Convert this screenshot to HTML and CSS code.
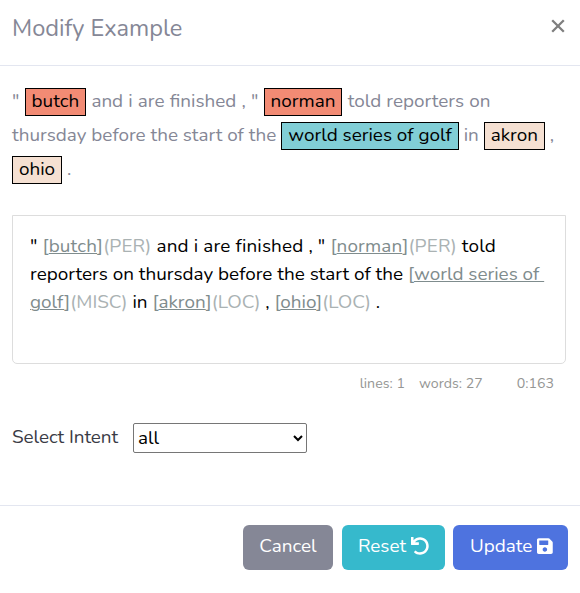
FILE: index.html
```html
<!DOCTYPE html>
<html lang="en">
<head>
  <meta charset="UTF-8" />
  <meta name="viewport" content="width=device-width, initial-scale=1" />
  <title>Modify Example</title>
  <link rel="stylesheet" href="styles.css">
</head>
<body>
  <div class="modal-content">
    <header class="modal-header">
      <h5 class="modal-title">Modify Example</h5>
      <button class="close" type="button" aria-label="Close">
        <svg viewBox="0 0 14 14"><path d="M1.2 1.2 12.8 12.8M12.8 1.2 1.2 12.8" /></svg>
      </button>
    </header>

    <div class="modal-body">
      <div class="preview">
        <div class="line line-1">" <span class="entity per">butch</span> and i are finished , " <span class="entity per">norman</span> told reporters on</div>
        <div class="line line-2">thursday before the start of the <span class="entity misc">world series of golf</span> in <span class="entity loc">akron</span> ,</div>
        <div class="line line-3"><span class="entity loc">ohio</span> .</div>
      </div>

      <div class="editor" contenteditable="true" spellcheck="false">
        <div class="row row-1">" <span class="link">[<u>butch</u>]</span><span class="url">(PER)</span> and i are finished , " <span class="link">[<u>norman</u>]</span><span class="url">(PER)</span> told</div>
        <div class="row row-2">reporters on thursday before the start of the <span class="link">[<u>world series of </u></span></div>
        <div class="row row-3"><span class="link"><u>golf</u>]</span><span class="url">(MISC)</span> in <span class="link">[<u>akron</u>]</span><span class="url">(LOC)</span> , <span class="link">[<u>ohio</u>]</span><span class="url">(LOC)</span> .</div>
      </div>
      <div class="editor-statusbar">
        <span class="lines">lines: 1</span>
        <span class="words">words: 27</span>
        <span class="cursor">0:163</span>
      </div>

      <div class="intent">
        <label for="intent">Select Intent</label>
        <select id="intent">
          <option>all</option>
        </select>
      </div>
    </div>

    <footer class="modal-footer">
      <button class="btn btn-secondary" type="button">Cancel</button>
      <button class="btn btn-info" type="button">Reset
        <svg class="icon-undo" viewBox="0 0 512 512"><path d="M212.333 224.333H12c-6.627 0-12-5.373-12-12V12C0 5.373 5.373 0 12 0h48c6.627 0 12 5.373 12 12v78.112C117.773 39.279 184.26 7.47 258.175 8.007c136.906.994 246.448 111.623 246.157 248.532C504.041 393.258 393.12 504 256.333 504c-64.089 0-122.496-24.313-166.51-64.215-5.099-4.622-5.334-12.554-.467-17.42l33.967-33.967c4.474-4.474 11.662-4.717 16.401-.525C170.76 415.336 211.58 432 256.333 432c97.268 0 176-78.716 176-176 0-97.267-78.716-176-176-176-58.496 0-110.28 28.476-142.274 72.333h98.274c6.627 0 12 5.373 12 12v48c0 6.627-5.373 12-12 12z" /></svg>
      </button>
      <button class="btn btn-primary" type="button">Update
        <svg class="icon-save" viewBox="0 0 448 512"><path d="M433.941 129.941l-83.882-83.882A48 48 0 0 0 316.118 32H48C21.49 32 0 53.49 0 80v352c0 26.51 21.49 48 48 48h352c26.51 0 48-21.49 48-48V163.882a48 48 0 0 0-14.059-33.941zM224 416c-35.346 0-64-28.654-64-64 0-35.346 28.654-64 64-64s64 28.654 64 64c0 35.346-28.654 64-64 64zm96-304.52V212c0 6.627-5.373 12-12 12H76c-6.627 0-12-5.373-12-12V108c0-6.627 5.373-12 12-12h228.52c3.183 0 6.235 1.264 8.485 3.515l3.48 3.48A11.996 11.996 0 0 1 320 111.48z" /></svg>
      </button>
    </footer>
  </div>
</body>
</html>
```
FILE: styles.css
```css
* {
  box-sizing: border-box;
}

body {
  margin: 0;
  background: #fff;
  color: #858796;
  font-family: Nunito, Lato, sans-serif;
  font-size: 18.9px;
  font-weight: 370;
  line-height: 28px;
}

button,
select {
  font-family: inherit;
  font-size: inherit;
  font-weight: inherit;
}

.modal-content {
  height: 593px;
  overflow: hidden;
}

.modal-header {
  display: flex;
  justify-content: space-between;
  height: 66px;
  padding: 12px 15px 0 12px;
  border-bottom: 1px solid #e3e6f0;
}

.modal-title {
  margin: 0;
  font-size: 23.6px;
  font-weight: inherit;
  line-height: 32px;
}

.close {
  height: 14px;
  margin-top: 7px;
  padding: 0;
  border: 0;
  background: none;
}

.close svg {
  display: block;
  width: 14px;
  height: 14px;
  fill: none;
  stroke: #7f7f7f;
  stroke-width: 2.3;
}

.modal-body {
  height: 439px;
  padding: 18px 14px 0 12px;
}

.preview {
  height: 131px;
  white-space: nowrap;
}

.line {
  height: 34px;
  line-height: 34px;
}

.line-1 {
  word-spacing: 0.3px;
}

.entity {
  display: inline-block;
  height: 28px;
  padding: 0 6px;
  border: 1px solid #000;
  color: #000;
  line-height: 24px;
}

.per {
  background: #f28b74;
}

.misc {
  background: #81ced6;
}

.loc {
  background: #f5e0d2;
}

.editor {
  height: 149px;
  padding: 16px 17px;
  border: 1px solid #ddd;
  border-radius: 0 0 5px 5px;
  color: #000;
  font-variant-ligatures: none;
}

.row {
  height: 28px;
  white-space: pre;
}

.row-1 {
  letter-spacing: 0.15px;
}

.link {
  color: #7f8c8d;
}

.link u {
  text-underline-offset: 1px;
  text-decoration-thickness: 1px;
}

.url {
  color: #aab2b3;
}

.editor-statusbar {
  display: flex;
  justify-content: flex-end;
  height: 39px;
  padding: 6px 12px 0 0;
  color: #959694;
  font-size: 14.2px;
}

.words {
  margin-left: 14px;
}

.cursor {
  margin-left: 34px;
}

.intent {
  display: flex;
  align-items: center;
  gap: 15px;
  margin-top: 20px;
  color: #3a3b45;
}

.intent label {
  width: 106px;
  padding-bottom: 2px;
  white-space: nowrap;
  letter-spacing: -0.07px;
}

.intent select {
  width: 174px;
  height: 30px;
  padding: 0 0 2px;
  border: 1px solid #767676;
  border-radius: 2px;
  background-color: #fff;
  color: #000;
}

.modal-footer {
  display: flex;
  justify-content: flex-end;
  height: 88px;
  padding: 19px 12px 0;
  border-top: 1px solid #e3e6f0;
}

.btn {
  display: flex;
  align-items: center;
  justify-content: center;
  gap: 5px;
  height: 45px;
  padding: 0 0 3px;
  border: 0;
  border-radius: 6px;
  color: #fff;
}

.btn svg {
  height: 18px;
  fill: #fff;
}

.btn-secondary {
  width: 90px;
  margin-right: 9px;
  background: #858796;
}

.btn-info {
  width: 103px;
  margin-right: 8px;
  background: #36b9cc;
}

.btn-primary {
  width: 115px;
  padding-left: 2px;
  background: #4e73df;
}
```
